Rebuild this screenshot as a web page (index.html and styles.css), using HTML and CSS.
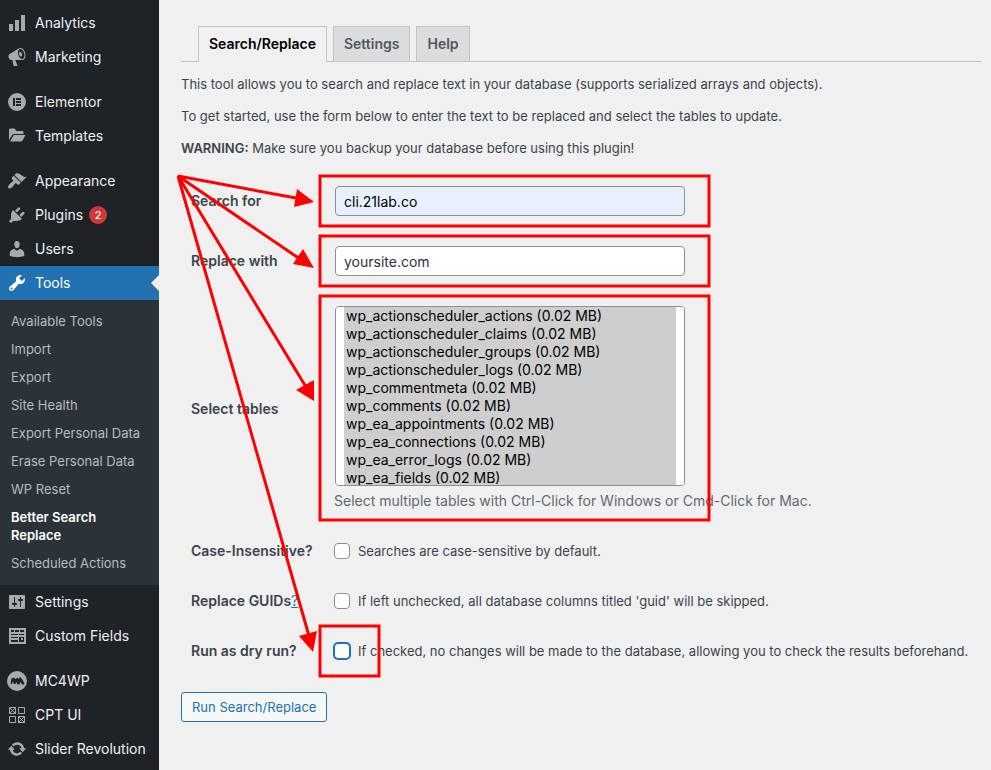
FILE: index.html
```html
<!DOCTYPE html>
<html lang="en">
<head>
    <meta charset="UTF-8">
    <meta name="viewport" content="width=device-width, initial-scale=1.0">
    <title>Better Search Replace</title>
    <link rel="stylesheet" href="styles.css">
</head>
<body>

    <!-- Admin menu -->
    <nav class="admin-menu">
        <ul class="menu">
            <li>
                <a href="#">
                    <svg class="icon" viewBox="0 0 20 20"><path d="M2 11h4v7H2zM8 7h4v11H8zM14 2h4v16h-4z"/></svg>
                    Analytics
                </a>
            </li>
            <li>
                <a href="#">
                    <svg class="icon" viewBox="0 0 20 20"><path d="M18.15 5.94c.46 1.62.38 3.22-.02 4.48-.42 1.28-1.26 2.18-2.3 2.48-.16.06-.26.06-.4.06-.06.02-.12.02-.18.02-.06.02-.14.02-.22.02h-6.8l2.22 5.5c.02.14-.06.26-.14.34-.08.1-.24.16-.34.16H6.95c-.1 0-.26-.06-.34-.16-.08-.08-.16-.2-.14-.34l-1-5.5H4.25l-.02-.02c-.5.06-1.08-.18-1.54-.62s-.88-1.08-1.06-1.88c-.24-.8-.2-1.56-.02-2.2.18-.62.58-1.08 1.06-1.3l.02-.02 9-5.4c.1-.06.18-.1.24-.16.06-.04.14-.08.24-.12.16-.08.28-.12.5-.18 1.04-.3 2.24.1 3.22.98s1.84 2.24 2.26 3.86zm-2.58 5.98h-.02c.4-.1.74-.34 1.04-.7.58-.7.86-1.76.86-3.04 0-.64-.1-1.3-.28-1.98-.34-1.36-1.02-2.5-1.78-3.24s-1.68-1.1-2.46-.88c-.82.22-1.4.96-1.7 2-.32 1.04-.28 2.36.06 3.72.38 1.36 1 2.5 1.8 3.24.78.74 1.62 1.1 2.48.88zm-2.54-7.08c.22-.04.42-.02.62.04.38.16.76.48 1.02 1s.42 1.2.42 1.78c0 .3-.04.56-.12.8-.18.48-.44.84-.86.94-.34.1-.8-.06-1.14-.4s-.64-.86-.78-1.5c-.18-.62-.12-1.24.02-1.72s.48-.84.82-.94z"/></svg>
                    Marketing
                </a>
            </li>
            <li class="group-start">
                <a href="#">
                    <svg class="icon" viewBox="0 0 20 20"><path fill-rule="evenodd" d="M10 1a9 9 0 1 0 0 18 9 9 0 0 0 0-18zM6 6h2v8H6zM9 6h5v2H9zM9 9h5v2H9zM9 12h5v2H9z"/></svg>
                    Elementor
                </a>
            </li>
            <li>
                <a href="#">
                    <svg class="icon" viewBox="0 0 20 20"><path d="M2 4c0-1 .5-1.5 1.5-1.5h4L9.5 5H15c1 0 1.5.5 1.5 1.5V8h-9c-1.2 0-2 .5-2.6 1.5L2 14zM3 15.5l3-5.3C6.4 9.4 6.9 9 7.8 9h10.7l-3 5.500c-.4.7-.9 1-1.7 1z"/></svg>
                    Templates
                </a>
            </li>
            <li class="group-start">
                <a href="#">
                    <svg class="icon" viewBox="0 0 20 20"><path d="M14.48 11.06L7.41 3.99l1.5-1.5c.5-.56 2.3-.47 3.51.32 1.21.8 1.43 1.28 2.91 2.1 1.18.64 2.45 1.26 4.45.85zm-.71.71L6.7 4.7 4.93 6.47c-.39.39-.39 1.02 0 1.41l1.06 1.06c.39.39.39 1.03 0 1.42-.6.6-1.43 1.11-2.21 1.69-.35.26-.7.53-1.01.84C1.43 14.23.4 16.08 1.4 17.07c.99 1 2.84-.03 4.18-1.36.31-.31.58-.66.85-1.02.57-.78 1.08-1.61 1.69-2.21.39-.39 1.02-.39 1.41 0l1.06 1.06c.39.39 1.02.39 1.41 0z"/></svg>
                    Appearance
                </a>
            </li>
            <li>
                <a href="#">
                    <svg class="icon" viewBox="0 0 20 20"><path d="M13.11 4.36L9.87 7.6 8 5.73l3.24-3.24c.35-.34 1.05-.2 1.56.32.52.51.66 1.21.31 1.55zm-8 1.77l.91-1.12 9.01 9.01-1.19.84c-.71.71-2.63 1.16-3.82 1.16H6.14L4.9 17.26c-.59.59-1.54.59-2.12 0-.59-.58-.59-1.53 0-2.12l1.24-1.24v-3.88c0-1.13.4-3.19 1.09-3.89zm7.26 3.97l3.24-3.24c.34-.35 1.04-.21 1.55.31.52.51.66 1.21.31 1.55l-3.24 3.25z"/></svg>
                    Plugins <span class="update-count">2</span>
                </a>
            </li>
            <li>
                <a href="#">
                    <svg class="icon" viewBox="0 0 20 20"><path d="M10 9.25c-2.27 0-2.73-3.44-2.73-3.44C7 4.02 7.82 2 9.97 2c2.16 0 2.98 2.02 2.71 3.81 0 0-.41 3.44-2.68 3.44zm0 2.57L12.72 10c2.39 0 4.52 2.33 4.52 4.53v2.49s-3.65 1.13-7.24 1.13c-3.65 0-7.24-1.13-7.24-1.13v-2.49c0-2.25 1.94-4.48 4.47-4.48z"/></svg>
                    Users
                </a>
            </li>
            <li class="current">
                <a href="#">
                    <svg class="icon" viewBox="0 0 20 20"><path d="M16.68 9.77c-1.34 1.34-3.3 1.67-4.95.99l-5.41 6.52c-.99.99-2.59.99-3.58 0s-.99-2.59 0-3.57l6.52-5.42c-.68-1.65-.35-3.61.99-4.95 1.28-1.28 3.12-1.62 4.72-1.06l-2.89 2.89 2.82 2.82 2.86-2.87c.53 1.58.18 3.39-1.08 4.65zM3.81 16.21c.4.39 1.04.39 1.43 0 .4-.4.4-1.04 0-1.43-.39-.4-1.03-.4-1.43 0-.39.39-.39 1.03 0 1.43z"/></svg>
                    Tools
                </a>
                <ul class="submenu">
                    <li><a href="#">Available Tools</a></li>
                    <li><a href="#">Import</a></li>
                    <li><a href="#">Export</a></li>
                    <li><a href="#">Site Health</a></li>
                    <li><a href="#">Export Personal Data</a></li>
                    <li><a href="#">Erase Personal Data</a></li>
                    <li><a href="#">WP Reset</a></li>
                    <li><a href="#" class="active">Better Search Replace</a></li>
                    <li><a href="#">Scheduled Actions</a></li>
                </ul>
            </li>
            <li>
                <a href="#">
                    <svg class="icon" viewBox="0 0 20 20"><path d="M18 16V4c0-.55-.45-1-1-1H3c-.55 0-1 .45-1 1v12c0 .55.45 1 1 1h14c.55 0 1-.45 1-1zM8 11h1c.55 0 1 .45 1 1s-.45 1-1 1H8v1.5c0 .28-.22.5-.5.5s-.5-.22-.5-.5V13H6c-.55 0-1-.45-1-1s.45-1 1-1h1V5.5c0-.28.22-.5.5-.5s.5.22.5.5V11zm5-2h-1c-.55 0-1-.45-1-1s.45-1 1-1h1V5.5c0-.28.22-.5.5-.5s.5.22.5.5V7h1c.55 0 1 .45 1 1s-.45 1-1 1h-1v5.5c0 .28-.22.5-.5.5s-.5-.22-.5-.5V9z"/></svg>
                    Settings
                </a>
            </li>
            <li>
                <a href="#">
                    <svg class="icon" viewBox="0 0 20 20"><path fill-rule="evenodd" d="M2 2h17v16H2zM4 4v2h3V4zM8 4v2h4V4zM13 4v2h4V4zM4 8v1h7V8zM4 11v1h7v-1zM4 14v2h7v-2zM12 8v1h5V8zM12 11v5h5v-5zM14 12h2v2h-2z"/></svg>
                    Custom Fields
                </a>
            </li>
            <li class="group-start">
                <a href="#">
                    <svg class="icon" viewBox="0 0 20 20"><circle cx="10" cy="10" r="10"/><path class="cut" d="M3.5 12.5l1-5 2.500-1 1.500 1.500 2-1.500 1 1.500L13 6l2 2 2.500 4.500-1.500 1.500-3-3-.5 2.500h-2l-1-2.500-1 2H7L6 10.500 5 13z"/></svg>
                    MC4WP
                </a>
            </li>
            <li>
                <a href="#">
                    <svg class="icon" viewBox="0 0 20 20"><g class="lines"><path d="M2.5 2.5h6v6h-6zM11.5 2.5h6v6h-6zM2.5 11.5h6v6h-6zM11.5 11.5h6v6h-6z"/><path d="M2.5 2.5l6 6M8.5 2.5l-6 6M11.5 11.5l6 6M17.5 11.5l-6 6"/></g></svg>
                    CPT UI
                </a>
            </li>
            <li>
                <a href="#">
                    <svg class="icon" viewBox="0 0 20 20"><path d="M10.2 3.28c3.53 0 6.43 2.61 6.92 6h2.08l-3.5 4-3.5-4h2.32c-.45-1.97-2.21-3.45-4.32-3.45-1.45 0-2.73.71-3.54 1.78L4.95 5.66C6.23 4.2 8.11 3.28 10.2 3.28zm-.4 13.44c-3.52 0-6.43-2.61-6.92-6H.8l3.5-4c1.17 1.33 2.33 2.67 3.5 4H5.48c.45 1.97 2.21 3.45 4.32 3.45 1.45 0 2.73-.71 3.54-1.78l1.71 1.95c-1.28 1.46-3.15 2.38-5.25 2.38z"/></svg>
                    Slider Revolution
                </a>
            </li>
        </ul>
    </nav>

    <!-- Page content -->
    <main class="content">
        <nav class="tabs">
            <a href="#" class="tab tab-active">Search/Replace</a>
            <a href="#" class="tab">Settings</a>
            <a href="#" class="tab">Help</a>
        </nav>

        <div class="intro">
            <p>This tool allows you to search and replace text in your database (supports serialized arrays and objects).</p>
            <p>To get started, use the form below to enter the text to be replaced and select the tables to update.</p>
            <p><strong>WARNING:</strong> Make sure you backup your database before using this plugin!</p>
        </div>

        <form>
            <div class="form-row">
                <label class="row-label" for="search-for">Search for</label>
                <div><input type="text" id="search-for" class="text-field autofilled" value="cli.21lab.co"></div>
            </div>

            <div class="form-row">
                <label class="row-label" for="replace-with">Replace with</label>
                <div><input type="text" id="replace-with" class="text-field" value="yoursite.com"></div>
            </div>

            <div class="form-row">
                <label class="row-label" for="select-tables">Select tables</label>
                <div>
                    <select id="select-tables" class="table-list" multiple>
                        <option selected>wp_actionscheduler_actions (0.02 MB)</option>
                        <option selected>wp_actionscheduler_claims (0.02 MB)</option>
                        <option selected>wp_actionscheduler_groups (0.02 MB)</option>
                        <option selected>wp_actionscheduler_logs (0.02 MB)</option>
                        <option selected>wp_commentmeta (0.02 MB)</option>
                        <option selected>wp_comments (0.02 MB)</option>
                        <option selected>wp_ea_appointments (0.02 MB)</option>
                        <option selected>wp_ea_connections (0.02 MB)</option>
                        <option selected>wp_ea_error_logs (0.02 MB)</option>
                        <option selected>wp_ea_fields (0.02 MB)</option>
                    </select>
                    <p class="description">Select multiple tables with Ctrl-Click for Windows or Cmd-Click for Mac.</p>
                </div>
            </div>

            <div class="form-row">
                <label class="row-label" for="case-insensitive">Case-Insensitive?</label>
                <div class="check">
                    <input type="checkbox" id="case-insensitive">
                    <label for="case-insensitive">Searches are case-sensitive by default.</label>
                </div>
            </div>

            <div class="form-row">
                <div class="row-label"><label for="replace-guids">Replace GUIDs</label><a href="#">?</a></div>
                <div class="check">
                    <input type="checkbox" id="replace-guids">
                    <label for="replace-guids">If left unchecked, all database columns titled 'guid' will be skipped.</label>
                </div>
            </div>

            <div class="form-row">
                <label class="row-label" for="dry-run">Run as dry run?</label>
                <div class="check">
                    <input type="checkbox" id="dry-run" class="focused">
                    <label for="dry-run">If checked, no changes will be made to the database, allowing you to check the results beforehand.</label>
                </div>
            </div>

            <button type="submit" class="button">Run Search/Replace</button>
        </form>
    </main>

    <!-- Red boxes and arrows over the form -->
    <svg class="annotations" width="720" height="700" viewBox="0 0 720 700" aria-hidden="true">
        <g class="marks">
            <rect x="320" y="176" width="389" height="50"/>
            <rect x="320" y="236" width="389" height="50"/>
            <rect x="320" y="296" width="389" height="224"/>
            <rect x="320" y="626" width="59" height="50"/>
            <path d="M296 198L178 176L300 259M178 176L306 387M178 176L309 636"/>
        </g>
        <path class="heads" d="M314 202L297 189L294 207zM314 268L303 249L293 264zM314 401L314 380L296 390zM313 652L317 631L299 636z"/>
    </svg>

</body>
</html>
```
FILE: styles.css
```css
* {
    box-sizing: border-box;
}

body {
    display: flex;
    min-height: 100vh;
    margin: 0;
    background-color: #f0f0f1;
    color: #3c434a;
    font-family: Inter, "Open Sans", sans-serif;
    font-size: 13px;
    line-height: 20px;
}

p {
    margin: 0;
}

strong {
    font-weight: 600;
}

/* Admin menu */
.admin-menu {
    flex: 0 0 159px;
    padding: 6px 0 4px;
    background-color: #1d2327;
}

.menu,
.submenu {
    margin: 0;
    padding: 0;
    list-style: none;
}

.menu > li > a {
    position: relative;
    display: flex;
    align-items: center;
    gap: 8px;
    height: 34px;
    padding-left: 7px;
    color: #f0f0f1;
    font-size: 14px;
    text-decoration: none;
    white-space: nowrap;
}

.menu > .group-start {
    margin-top: 11px;
}

.icon {
    flex: none;
    width: 20px;
    height: 20px;
    fill: #a7aaad;
}

.icon .cut {
    fill: #1d2327;
}

.icon .lines {
    fill: none;
    stroke: #a7aaad;
}

.update-count {
    width: 18px;
    height: 18px;
    margin-left: -2px;
    border-radius: 9px;
    background-color: #d63638;
    color: #fff;
    font-size: 11px;
    font-weight: 500;
    line-height: 18px;
    text-align: center;
}

.menu > .current > a {
    background-color: #2271b1;
    color: #fff;
}

.current .icon {
    fill: #fff;
}

/* Arrow pointing at the open page */
.menu > .current > a::after {
    content: "";
    position: absolute;
    top: 9px;
    right: 0;
    border: 8px solid transparent;
    border-left: 0;
    border-right-color: #f0f0f1;
}

.submenu {
    padding: 7px 0 8px;
    background-color: #2c3338;
}

.submenu a {
    display: block;
    padding: 5px 11px;
    color: #b5bcc2;
    line-height: 18px;
    text-decoration: none;
}

.submenu .active {
    color: #fff;
    font-weight: 600;
}

/* Content */
.content {
    flex: 1;
    min-width: 0;
    padding: 26px 10px 26px 22px;
}

.tabs {
    display: flex;
    gap: 6px;
    padding-left: 17px;
    border-bottom: 1px solid #c3c4c7;
}

.tab {
    padding: 5px 10px;
    border: 1px solid #c3c4c7;
    border-bottom: 0;
    background-color: #dcdcde;
    color: #50575e;
    font-size: 14px;
    font-weight: 600;
    line-height: 24px;
    text-decoration: none;
}

.tab-active {
    margin-bottom: -1px;
    padding-bottom: 6px;
    background-color: #f0f0f1;
    color: #000;
}

.intro {
    display: flex;
    flex-direction: column;
    gap: 12px;
    padding: 12px 0 13px;
}

/* Form */
.form-row {
    display: grid;
    grid-template-columns: 143px 1fr;
    align-items: center;
    padding: 15px 0 15px 10px;
}

.row-label {
    font-size: 14px;
    font-weight: 600;
    white-space: nowrap;
}

.row-label a {
    color: #2271b1;
    font-weight: 400;
}

.text-field,
.table-list {
    display: block;
    width: 350px;
    margin: 0 0 0 1px;
    border: 1px solid #8c8f94;
    border-radius: 4px;
    background-color: #fff;
    color: #2c3338;
    font-family: inherit;
    font-size: 14px;
}

.text-field {
    height: 30px;
    padding: 0 8px;
}

.autofilled {
    background-color: #e8f0fe;
    color: #000;
}

.table-list {
    height: 180px;
    padding: 0 8px;
    scrollbar-width: none;
}

.table-list option {
    min-height: 18px;
    padding: 0 2px;
    line-height: 18px;
}

.table-list option:checked {
    background-color: #cecece;
    color: #000;
}

.description {
    padding-top: 5px;
    color: #646970;
    font-size: 14px;
}

.check {
    display: flex;
    align-items: center;
    gap: 8px;
    white-space: nowrap;
}

.check input {
    appearance: none;
    width: 16px;
    height: 16px;
    margin: 0;
    border: 1px solid #8c8f94;
    border-radius: 4px;
    background-color: #fff;
}

.check .focused,
.check input:focus {
    border-color: #2271b1;
    box-shadow: 0 0 0 1px #2271b1;
    outline: none;
}

.button {
    display: block;
    height: 30px;
    margin-top: 16px;
    padding: 0 10px;
    border: 1px solid #2271b1;
    border-radius: 3px;
    background-color: #f6f7f7;
    color: #2271b1;
    font-family: inherit;
    font-size: 13px;
}

/* Annotations */
.annotations {
    position: absolute;
    top: 0;
    left: 0;
    pointer-events: none;
}

.marks {
    fill: none;
    stroke: #f00;
    stroke-width: 3;
}

.heads {
    fill: #f00;
}
```
